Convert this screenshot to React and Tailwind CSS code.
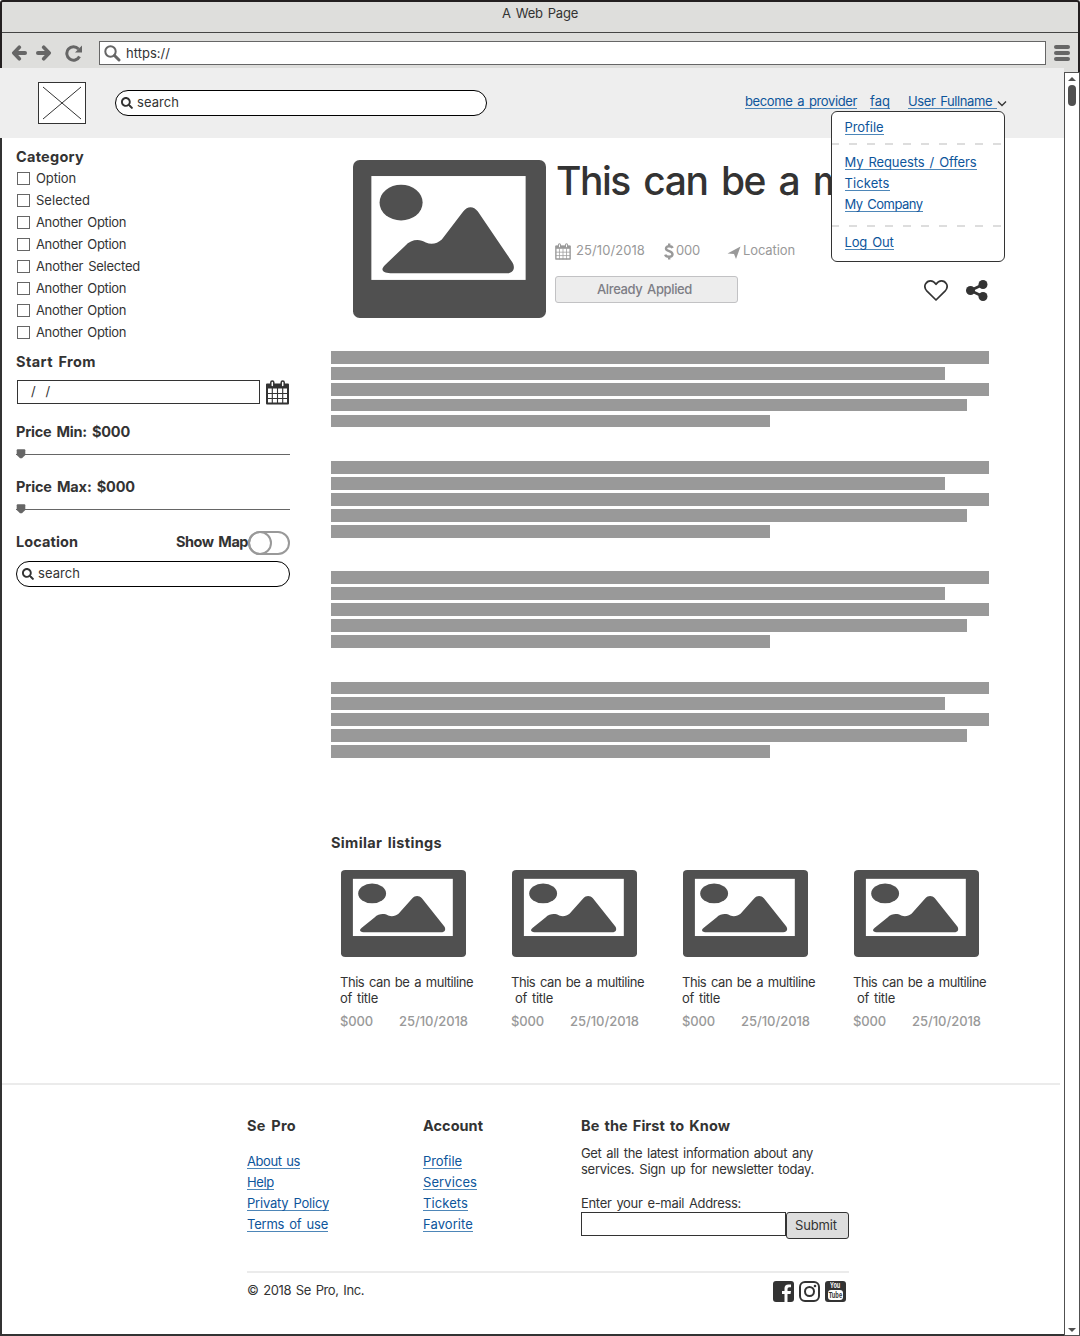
import React, { useLayoutEffect, useRef } from "react";
import { FaSearch } from "react-icons/fa";

// Single line of text whose tracking is adjusted so that it spans `w` pixels.
function T({ w, children, className = "" }) {
  const ref = useRef(null);
  useLayoutEffect(() => {
    const el = ref.current;
    const fit = () => {
      el.style.letterSpacing = "0px";
      const natural = el.getBoundingClientRect().width;
      el.style.letterSpacing = `${(w - natural) / String(children).length}px`;
    };
    fit();
    document.fonts?.ready.then(fit);
  }, [w, children]);
  return (
    <span ref={ref} className={`inline-block whitespace-pre [word-spacing:0.12em] ${className}`}>
      {children}
    </span>
  );
}

function Link({ w, children, className = "" }) {
  return (
    <a className={`flex h-[15px] w-fit items-center border-b border-[#4d86b8] text-[13px] leading-[14px] text-[#0d559b] ${className}`}>
      <T w={w}>{children}</T>
    </a>
  );
}

function Heading({ w, children, className = "" }) {
  return (
    <h3 className={`flex h-[22px] items-center text-[14.5px] leading-none font-bold ${className}`}>
      <T w={w}>{children}</T>
    </h3>
  );
}

function Picture({ className }) {
  return (
    <svg viewBox="0 0 578 473" preserveAspectRatio="none" className={className}>
      <rect width="578" height="473" rx="20" fill="#505050" />
      <rect x="55" y="48" width="462" height="311" fill="#fff" />
      <ellipse cx="144" cy="127.500" rx="64.500" ry="53.500" fill="#505050" />
      <path d="M96 314L155 258C175 236 200 236 218 247C236 255 252 250 266 238L330 154C343 137 361 137 374 154L477 306C487 322 481 339 463 339H112C88 339 81 328 96 314Z" fill="#505050" />
    </svg>
  );
}

function Calendar({ className }) {
  return (
    <svg viewBox="0 0 23 25" className={className} fill="none" stroke="currentColor">
      <path d="M1 4.500H22V23.500H1Z" strokeWidth="2" strokeLinejoin="round" />
      <path d="M1 4H22V8.500H1Z" fill="currentColor" stroke="none" />
      <path d="M6.300 8V24M11.500 8V24M16.700 8V24M1 13.500H22M1 18.500H22" strokeWidth="1.100" />
      <rect x="4.800" y="1" width="3" height="6" rx="1.500" fill="#fff" strokeWidth="1.500" />
      <rect x="15.200" y="1" width="3" height="6" rx="1.500" fill="#fff" strokeWidth="1.500" />
    </svg>
  );
}

function Arrow({ className }) {
  return (
    <svg viewBox="0 0 16 16" className={className} fill="none" stroke="#666" strokeWidth="4" strokeLinecap="round" strokeLinejoin="round">
      <path d="M8.300 2.200L2.800 8L8.300 13.800" strokeWidth="3.600" />
      <path d="M4 8H14" />
    </svg>
  );
}

function Slider() {
  return (
    <div className="flex h-[11px] items-center">
      <svg viewBox="0 0 274 11" className="h-[11px] w-[274px]">
        <path d="M0 5.500H274" stroke="#666" />
        <path d="M.7 1.200Q.7 .2 1.700 .2H8.300Q9.300 .2 9.300 1.200V6L6 9.300H4L.7 6Z" fill="#666" />
      </svg>
    </div>
  );
}

function SearchBox({ className }) {
  return (
    <div className={`flex h-[26px] items-center rounded-full border border-black bg-white pl-[5px] text-[13px] leading-none ${className}`}>
      <FaSearch className="mr-[4px] size-[12px]" />
      <T w={42} className="pb-px">search</T>
    </div>
  );
}

const options = [
  ["Option", 40], ["Selected", 54], ["Another Option", 90], ["Another Option", 90],
  ["Another Selected", 104], ["Another Option", 90], ["Another Option", 90], ["Another Option", 90],
];

function Sidebar() {
  return (
    <aside className="ml-[14px] w-[274px] pt-[8px]">
      <Heading w={68} className="-mb-px">Category</Heading>
      {options.map(([label, w], i) => (
        <label key={i} className="flex h-[22px] items-center pl-px text-[13px] leading-none">
          <span className="mr-[6px] size-[13px] border border-[#666]" />
          <T w={w}>{label}</T>
        </label>
      ))}
      <Heading w={80} className="mt-[8px]">Start From</Heading>
      <div className="mt-[7px] flex h-[25px]">
        <div className="ml-px flex h-[24px] w-[243px] items-center border border-[#333] pb-[2px] pl-[13px] text-[13px] leading-none"><T w={19}>/  /</T></div>
        <Calendar className="ml-[6px] h-[25px] w-[23px]" />
      </div>
      <Heading w={114} className="mt-[16px]">Price Min: $000</Heading>
      <div className="mt-[6px]"><Slider /></div>
      <Heading w={119} className="mt-[16px]">Price Max: $000</Heading>
      <div className="mt-[6px]"><Slider /></div>
      <div className="mt-[16px] flex h-[26px] items-start justify-between">
        <Heading w={62}>Location</Heading>
        <div className="flex">
          <Heading w={72}>Show Map</Heading>
          <div className="h-[24px] w-[42px] rounded-full border-2 border-[#999]">
            <div className="-mt-[2px] -ml-[2px] size-[24px] rounded-full border-2 border-[#999]" />
          </div>
        </div>
      </div>
      <SearchBox className="mt-[4px] w-[274px]" />
    </aside>
  );
}

function Paragraph() {
  return (
    <div className="flex h-[76.4px] flex-col justify-between">
      <div className="h-[12.8px] w-[658px] bg-[#999]" />
      <div className="h-[12.8px] w-[614px] bg-[#999]" />
      <div className="h-[12.8px] w-[658px] bg-[#999]" />
      <div className="h-[12.8px] w-[636px] bg-[#999]" />
      <div className="h-[12.8px] w-[439px] bg-[#999]" />
    </div>
  );
}

function Listing() {
  return (
    <div className="flex h-[159px] pl-[21.500px]">
      <Picture className="mt-px h-[158px] w-[193px]" />
      <div className="ml-[9.500px] flex w-[434px] flex-col">
        <h1 className="-mt-px flex h-[44px] w-[276px] items-center overflow-hidden pl-px text-[39px] leading-none font-medium"><T w={290}>This can be a m</T></h1>
        <div className="mt-[39px] flex h-[18px] items-center text-[13px] leading-none text-[#999]">
          <Calendar className="mt-[3px] mr-[5px] h-[17px] w-[16px]" />
          <T w={69} className="mr-[19px]">25/10/2018</T>
          <svg viewBox="0 0 10 17" className="mt-[3px] mr-[2px] h-[17px] w-[10px]" fill="none" stroke="currentColor" strokeWidth="2.400"><path d="M8.600 5C7.800 2.900 2 2.400 2 5.500C2 8.800 8.500 7.500 8.500 11.200C8.500 14.600 2 14.400 1.200 11.600M5.200 .5V3.500M5.200 13.500V16.500" /></svg>
          <T w={24} className="mr-[27px]">000</T>
          <svg viewBox="0 0 14 13" className="mt-[4px] mr-[2px] h-[13px] w-[14px]" fill="currentColor"><path d="M13.500 .5L9 13L7 8L.5 7.500Z" /></svg>
          <T w={52}>Location</T>
        </div>
        <div className="mt-[17px] flex h-[27px] shrink-0 items-center">
          <button className="flex h-[27px] w-[183px] items-center justify-center rounded-[3px] border border-[#c2c2c4] bg-[#ededed] pr-[4px] pb-px text-[13px] leading-none font-medium text-[#7d7d85]"><T w={95}>Already Applied</T></button>
          <svg viewBox="0 0 24 21" className="mt-px ml-[186px] h-[21px] w-[24px] shrink-0" fill="none" stroke="#333" strokeWidth="1.700" strokeLinejoin="round"><path d="M12 20L3 11.200C-2 5.500 3 .9 6.500 .9C9.500 .9 11 2.800 12 4.300C13 2.800 14.500 .9 17.500 .9C21 .9 26 5.500 21 11.200Z" /></svg>
          <svg viewBox="0 0 22 21" className="mt-px ml-[18px] h-[21px] w-[22px] shrink-0" fill="#333"><circle cx="4.500" cy="10.500" r="4.500" /><circle cx="17" cy="4.500" r="4.500" /><circle cx="17" cy="16.500" r="4.500" /><path d="M17 4.500L4.500 10.500L17 16.500" fill="none" stroke="#333" strokeWidth="2.800" /></svg>
        </div>
      </div>
    </div>
  );
}

function Card({ shift }) {
  return (
    <div className="w-[171px] pl-[9px] text-[13px] leading-[16px]">
      <Picture className="ml-px h-[87px] w-[125px]" />
      <div className="mt-[17px]"><T w={133}>This can be a multiline</T></div>
      <div className={`flex ${shift ? "pl-[4px]" : ""}`}><T w={38}>of title</T></div>
      <div className="mt-[7px] flex font-medium text-[#999]"><T w={33} className="mr-[26px]">$000</T><T w={69}>25/10/2018</T></div>
    </div>
  );
}

function Footer() {
  return (
    <footer className="ml-[245px] w-[602px]">
      <div className="flex h-[186px] pt-[30px]">
        <div className="flex w-[176px] flex-col gap-[6px]">
          <Heading w={49} className="mb-[11px]">Se Pro</Heading>
          <Link w={53}>About us</Link><Link w={27}>Help</Link><Link w={82}>Privaty Policy</Link><Link w={81}>Terms of use</Link>
        </div>
        <div className="flex w-[158px] flex-col gap-[6px]">
          <Heading w={60} className="mb-[11px]">Account</Heading>
          <Link w={39}>Profile</Link><Link w={54}>Services</Link><Link w={45}>Tickets</Link><Link w={50}>Favorite</Link>
        </div>
        <div className="w-[268px] text-[13px] leading-[16px]">
          <Heading w={149} className="mb-[8px]">Be the First to Know</Heading>
          <div className="flex"><T w={232}>Get all the latest information about any</T></div>
          <div className="flex"><T w={233}>services. Sign up for newsletter today.</T></div>
          <div className="mt-[18px] mb-px flex"><T w={160}>Enter your e-mail Address:</T></div>
          <div className="flex">
            <div className="h-[24px] w-[205px] border border-[#333]" />
            <button className="flex h-[27px] w-[63px] items-center rounded-[3px] border border-[#333] bg-[#ddd] pb-px pl-[8px] leading-none"><T w={42}>Submit</T></button>
          </div>
        </div>
      </div>
      <div className="flex h-[42px] items-start border-t-2 border-[#ebebeb] pt-[8px]">
        <div className="flex h-[18px] items-center text-[13px] leading-none"><T w={117}>© 2018 Se Pro, Inc.</T></div>
        <div className="ml-auto flex gap-[5px] pr-[3px]">
          <svg viewBox="0 0 21 21" className="size-[21px]"><rect width="21" height="21" rx="3" fill="#333" /><path d="M14.500 21V13H17.500L18 10H14.500V8Q14.500 6.300 16.200 6.300H18V3.500H15.500Q11.500 3.500 11.500 7.300V10H9V13H11.500V21Z" fill="#fff" /></svg>
          <svg viewBox="0 0 21 21" className="size-[21px]" fill="none" stroke="#333" strokeWidth="2"><rect x="1" y="1" width="19" height="19" rx="5" /><circle cx="10.500" cy="10.500" r="4.500" /><circle cx="16" cy="5" r="1.300" fill="#333" stroke="none" /></svg>
          <div className="flex size-[21px] flex-col items-center rounded-[3px] bg-[#333] font-['Liberation_Sans',sans-serif] text-[9px] leading-[9px] font-bold text-white">
            <span className="scale-x-[.62] scale-y-[1.1]">You</span>
            <span className="flex h-[10px] w-[15px] items-center justify-center rounded-[3px] bg-white text-[9px] text-[#333]"><span className="scale-x-[.64]">Tube</span></span>
          </div>
        </div>
      </div>
    </footer>
  );
}

function Dashes() {
  return <svg viewBox="0 0 172 2" className="h-[2px] w-[172px]"><path d="M0 1H169" stroke="#ddd" strokeWidth="2" strokeDasharray="8 10" strokeDashoffset="1" /></svg>;
}

function Menu() {
  return (
    <div className="absolute top-[43px] left-[831px] z-10 flex h-[151px] w-[174px] flex-col rounded-[6px] border border-[#333] bg-white">
      <Link w={39} className="mt-[8px] ml-[12.500px]">Profile</Link>
      <div className="mt-[8px] flex"><Dashes /></div>
      <div className="mt-[10px] ml-[12.500px] flex flex-col gap-[6px]"><Link w={132}>My Requests / Offers</Link><Link w={45}>Tickets</Link><Link w={78}>My Company</Link></div>
      <div className="mt-[13px] flex"><Dashes /></div>
      <Link w={49} className="mt-[8px] ml-[12.500px]">Log Out</Link>
    </div>
  );
}

export default function App() {
  return (
    <div className="flex h-[1336px] w-[1080px] flex-col overflow-hidden bg-white font-['Inter',sans-serif] text-[#333]">
      <div className="h-[68px] rounded-t-[3px] border-x-2 border-t-2 border-[#231f20] bg-[#dededc]">
        <div className="flex h-[31px] justify-center border-b border-[#444] pt-[4px] text-[13px] leading-[15px]"><T w={76}>A Web Page</T></div>
        <div className="flex h-[35px] items-center text-[#666]">
          <Arrow className="mt-[5px] ml-[9px] size-[16px]" />
          <Arrow className="mt-[5px] ml-[9px] size-[16px] rotate-180" />
          <svg viewBox="0 0 17 17" className="mt-[5px] ml-[13px] size-[17px]" fill="none" stroke="#666"><path d="M13.500 4A6.700 6.700 0 1 0 14.500 11.500" strokeWidth="3" /><path d="M17 .5V7.500H10Z" fill="#666" stroke="none" /></svg>
          <div className="mt-[5px] ml-[17px] flex h-[24px] w-[947px] items-center border border-[#666] bg-white text-[13px] leading-none text-[#333]">
            <svg viewBox="0 0 17 17" className="ml-[4px] size-[17px]" fill="none" stroke="#666"><circle cx="6.500" cy="6.500" r="5.200" strokeWidth="2" /><path d="M10.500 10.500L15 15" strokeWidth="3" strokeLinecap="round" /></svg>
            <T w={44} className="ml-[5px]">https://</T>
          </div>
          <div className="mt-[5px] ml-[8px] flex w-[16px] flex-col gap-[2px]"><i className="h-[4px] rounded-full bg-[#666]" /><i className="h-[4px] rounded-full bg-[#666]" /><i className="h-[4px] rounded-full bg-[#666]" /></div>
        </div>
      </div>
      <div className="flex h-[1268px]">
        <div className="relative flex w-[1064px] flex-col">
          <header className="flex h-[70px] items-center bg-[#eee]">
            <svg viewBox="0 0 48 42" className="ml-[38px] h-[42px] w-[48px]"><rect x=".5" y=".5" width="47" height="41" fill="#fff" stroke="#333" /><path d="M5 5L43 37M43 5L5 37" stroke="#333" /></svg>
            <SearchBox className="ml-[29px] w-[372px]" />
            <nav className="ml-[258px] flex pb-[3px]">
              <Link w={112}>become a provider</Link>
              <Link w={20} className="ml-[13px]">faq</Link>
              <Link w={89} className="ml-[18px]">{"User Fullname "}</Link>
              <svg viewBox="0 0 10 7" className="mt-[6px] h-[7px] w-[10px]" fill="none" stroke="#333" strokeWidth="1.300"><path d="M1 1.500L5 5.500L9 1.500" /></svg>
            </nav>
          </header>
          <Menu />
          <div className="h-[1198px] border-b-2 border-l-2 border-[#333]">
            <div className="flex h-[945px]">
              <Sidebar />
              <main className="ml-[41px] w-[704px] pt-[21px]">
                <Listing />
                <div className="mt-[33px] flex h-[407px] flex-col gap-[33.8px]"><Paragraph /><Paragraph /><Paragraph /><Paragraph /></div>
                <Heading w={111} className="mt-[74px]">Similar listings</Heading>
                <div className="mt-[15.500px] flex"><Card /><Card shift /><Card /><Card shift /></div>
              </main>
            </div>
            <div className="mr-[4px] h-[2px] bg-[#ebebeb]" />
            <Footer />
          </div>
        </div>
        <div className="flex w-[16px] flex-col">
          <div className="h-[4px] border-r-2 border-[#231f20] bg-[#dededc]" />
          <div className="flex flex-1 flex-col items-center border border-[#505050] bg-white">
            <svg viewBox="0 0 8 4" className="mt-[4px] h-[4px] w-[8px]"><path d="M4 0L8 4H0Z" fill="#505050" /></svg>
            <div className="mt-[4px] h-[21px] w-[8px] rounded-full bg-[#505050]" />
            <svg viewBox="0 0 8 4" className="mt-auto mb-[3px] h-[4px] w-[8px]"><path d="M0 0H8L4 4Z" fill="#505050" /></svg>
          </div>
        </div>
      </div>
    </div>
  );
}
